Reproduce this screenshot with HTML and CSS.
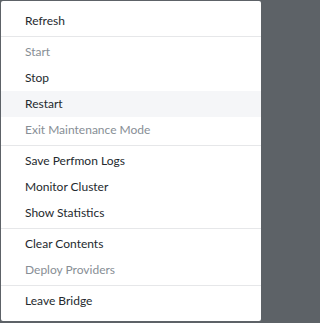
FILE: index.html
```html
<!DOCTYPE html>
<html lang="en">
<head>
<meta charset="utf-8">
<title>Context menu</title>
<link rel="stylesheet" href="styles.css">
</head>
<body>
<div class="menu" role="menu">
  <div class="item">Refresh</div>
  <div class="sep"></div>
  <div class="item disabled">Start</div>
  <div class="item">Stop</div>
  <div class="item hover">Restart</div>
  <div class="item disabled">Exit Maintenance Mode</div>
  <div class="sep"></div>
  <div class="item">Save Perfmon Logs</div>
  <div class="item">Monitor Cluster</div>
  <div class="item">Show Statistics</div>
  <div class="sep"></div>
  <div class="item">Clear Contents</div>
  <div class="item disabled">Deploy Providers</div>
  <div class="sep"></div>
  <div class="item">Leave Bridge</div>
</div>
</body>
</html>
```

FILE: styles.css
```css
html, body {
  margin: 0;
  padding: 0;
}
html {
  background: #5d6267;
}
body {
  width: 263px;
  height: 323px;
  background: #5d6267;
  font-family: "Lato", "Open Sans", sans-serif;
  overflow: hidden;
}
.menu {
  margin: 1px 0 0 1px;
  width: 260px;
  height: 320px;
  box-sizing: border-box;
  padding: 7px 0;
  background: #ffffff;
  border-radius: 2px;
}
.item {
  height: 26px;
  line-height: 26px;
  padding: 0 24px;
  font-size: 12px;
  color: #24292e;
  white-space: nowrap;
}
.item.disabled {
  color: #878e95;
}
.item.hover {
  background: #f5f6f8;
}
.sep {
  height: 1px;
  margin: 2px 0;
  background: #e6e7e9;
}
```
